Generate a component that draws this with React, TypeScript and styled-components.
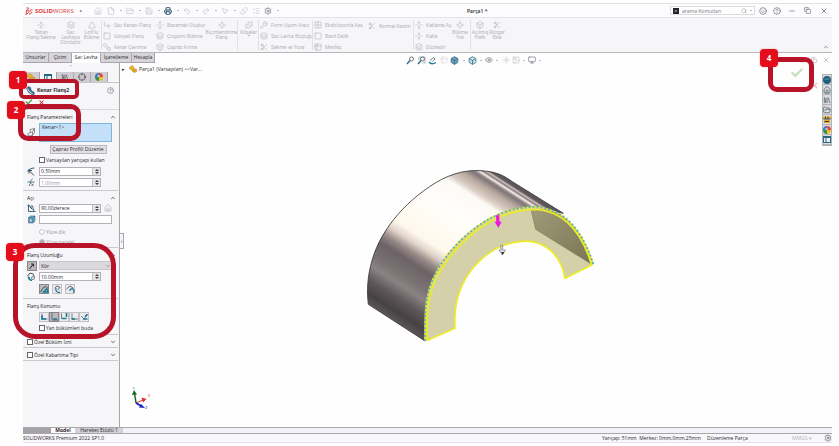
import React from 'react';
import styled, { createGlobalStyle, css } from 'styled-components';
import {
  House, File, FolderOpen, Save, Printer, Undo2, Redo2, MousePointer2, Pill, ListChecks, Settings,
  Search, Smile, CircleHelp, Minus, Copy, X, Check, ChevronUp, ChevronDown, Layers, Box, Puzzle,
  Scissors, FoldVertical, Wrench, Grid2x2, Square, CornerDownRight, Eye, Monitor, Sun, Image as Picture,
  Crosshair, Library, Table2, SquareStack, Component, UnfoldVertical, Triangle,
} from 'lucide-react';

const Global = createGlobalStyle`
  * { box-sizing: border-box; }
  html, body { margin: 0; background: #fefefe; }
  body, button, input, select {
    font-family: "Open Sans", "Noto Sans", sans-serif;
    font-size: 5px;
    line-height: 6px;
    color: #2c2a30;
  }
  button { padding: 0; border: 0; background: none; }
`;

const Page = styled.div`
  position: relative;
  display: flex;
  min-height: 100vh;
  padding: 3px 7px 3px 23px;
`;
const Window = styled.div`
  flex: 1;
  display: flex;
  flex-direction: column;
  min-width: 0;
`;

/* Title bar */
const TitleBar = styled.header`
  display: flex;
  align-items: center;
  height: 15px;
  flex: none;
  border-top: 1px solid #e4e2e6;
  border-bottom: 1px solid #e6e3e7;
  background: #fcfbfd;
`;
const Brand = styled.div`
  display: flex;
  align-items: center;
  gap: 2px;
  width: 68px;
  padding-left: 2px;
  color: #dc3a3c;
  font: 6px/8px "Open Sans", sans-serif;
  white-space: nowrap;
  b { font-weight: 700; }
  small { margin-left: 4px; color: #555; font-size: 4px; }
`;
const Tool = styled.button<{ $w?: number; $color?: string }>`
  display: inline-flex;
  align-items: center;
  justify-content: center;
  flex: none;
  width: ${p => p.$w ?? 12}px;
  height: 10px;
  color: ${p => p.$color ?? '#bfbcc2'};
`;
const Caret = styled.span<{ $w?: number }>`
  width: ${p => p.$w ?? 7}px;
  flex: none;
  display: flex;
  justify-content: center;
  &::after {
    content: "";
    border: 1px solid transparent;
    border-top-color: #77747a;
    border-bottom-width: 0;
  }
`;
const DocTitle = styled.h1`
  flex: 1;
  margin: 0;
  padding-left: 186px;
  font-size: 5px;
  font-weight: 600;
`;
const SearchBox = styled.label`
  display: flex;
  align-items: center;
  width: 85px;
  height: 9px;
  padding-left: 2px;
  border: 1px solid #dddbe0;
  background: #fff;
  color: #99969c;
  input { flex: 1; min-width: 0; border: 0; padding: 0 0 0 3px; outline: 0; background: none; height: 7px; }
  input::placeholder { color: #77747a; }
`;
const SearchMark = styled.span`
  width: 6px;
  height: 6px;
  background: #252329;
  color: #fff;
  font: 700 4px/6px "Open Sans", sans-serif;
  text-align: center;
`;

/* Ribbon */
const Ribbon = styled.div`
  display: flex;
  height: 35px;
  flex: none;
  padding-top: 2px;
  background: #f6f5f8;
  border-bottom: 1px solid #b9b6bb;
  color: #b6b3b9;
  button, span { font-family: Roboto, sans-serif; }
`;
const RibbonRule = styled.i`
  width: 1px;
  margin: 0 1px 2px 0;
  background: #e3e0e5;
`;
const BigButton = styled.button<{ $w: number }>`
  display: flex;
  flex-direction: column;
  align-items: center;
  width: ${p => p.$w}px;
  padding-top: 1px;
  color: inherit;
  flex: none;
  svg { margin-bottom: 1px; flex: none; }
  span { display: flex; white-space: nowrap; line-height: 5px; }
`;
const RibbonColumn = styled.div<{ $w: number }>`
  display: flex;
  flex-direction: column;
  width: ${p => p.$w}px;
  flex: none;
`;
const SmallButton = styled.button`
  display: flex;
  align-items: center;
  gap: 3px;
  height: 11px;
  color: inherit;
  white-space: nowrap;
  svg { flex: none; }
`;
const Collapse = styled.button`
  margin: auto 3px 2px auto;
  display: flex;
  color: #55525a;
`;

/* Command tabs */
const TabRow = styled.div`
  display: flex;
  height: 10px;
  flex: none;
`;
const CommandTab = styled.button<{ $w: number; $active?: boolean }>`
  width: ${p => p.$w}px;
  height: 10px;
  line-height: 9px;
  border-right: 1px solid #a9a6ab;
  border-bottom: 1px solid #a9a6ab;
  background: ${p => (p.$active ? '#fff' : '#d7d5d9')};
  ${p => p.$active && css`border-bottom-color: #fff;`}
`;
const ViewTools = styled.div`
  flex: 1;
  display: flex;
  align-items: center;
  padding: 1px 0 0 250px;
  height: 13px;
`;
const ViewWindow = styled.div`
  display: flex;
  padding-top: 2px;
`;

/* Body */
const Body = styled.div`
  flex: 1;
  display: flex;
  min-height: 0;
`;
const Panel = styled.aside`
  width: 97px;
  flex: none;
  background: #f6f5f8;
  border-right: 1px solid #aaa7ac;
`;
const Grip = styled.div`
  height: 9px;
  text-align: center;
  color: #a8a5aa;
  line-height: 7px;
`;
const PanelTabs = styled.div`
  display: flex;
  height: 11px;
  border-bottom: 1px solid #c9c6cb;
`;
const PanelTab = styled.button<{ $active?: boolean }>`
  width: 17px;
  display: flex;
  align-items: center;
  justify-content: center;
  border-right: 1px solid #a9a6ab;
  background: ${p => (p.$active ? '#f9f8fb' : '#cfcdd1')};
  color: #35323a;
`;
const PanelTitle = styled.div`
  display: flex;
  align-items: center;
  gap: 2px;
  height: 14px;
  padding: 0 5px 0 3px;
  h2 { margin: 0; font-size: 5px; font-weight: 700; flex: 1; }
`;
const Confirm = styled.div`
  display: flex;
  gap: 4px;
  height: 13px;
  padding: 0 0 0 2px;
  border-bottom: 1px solid #dad7dc;
`;
const Section = styled.section<{ $pb?: number }>`
  padding: 1px 2px ${p => p.$pb ?? 3}px 4px;
  border-bottom: 1px solid #cbc8cd;
  margin: 0 1px 0 0;
`;
const SectionHead = styled.h3`
  display: flex;
  align-items: center;
  justify-content: space-between;
  height: 11px;
  margin: 0;
  font-size: 5px;
  font-weight: 400;
  color: #1c1a20;
  label { display: flex; align-items: center; gap: 1px; }
`;
const Row = styled.div<{ $h?: number }>`
  display: grid;
  grid-template-columns: 12px 1fr;
  align-items: center;
  min-height: ${p => p.$h ?? 12}px;
  padding-right: 4px;
`;
const Selection = styled.button`
  height: 19px;
  border: 1px solid #7fb4dd;
  background: #c3e0f8;
  display: flex;
  padding: 0 2px;
`;
const PlainButton = styled.button`
  justify-self: center;
  width: 57px;
  height: 9px;
  margin-left: 5px;
  line-height: 7px;
  border: 1px solid #bbb8bd;
  background: #e3e1e5;
`;
const Field = styled.div`
  display: flex;
  align-items: center;
  gap: 3px;
`;
const Spin = styled.div`
  width: 62px;
  height: 9px;
  display: flex;
  border: 1px solid #b4b1b6;
  background: #fff;
  input { flex: 1; min-width: 0; border: 0; padding: 0 0 0 1px; background: none; outline: 0; height: 7px; }
  input:disabled { color: #99969c; }
`;
const SpinArrows = styled.span`
  width: 8px;
  display: flex;
  flex-direction: column;
  align-items: center;
  justify-content: center;
  gap: 1px;
  background: #e6e4e8;
  border-left: 1px solid #c3c0c5;
  &::before, &::after { content: ""; border: 2px solid transparent; }
  &::before { border-top-width: 0; border-bottom-color: #46434a; }
  &::after { border-bottom-width: 0; border-top-color: #46434a; }
`;
const TextInput = styled.input`
  width: 100%;
  height: 9px;
  border: 1px solid #b4b1b6;
  background: #fff;
  padding: 0 2px;
`;
const Option = styled.label<{ $muted?: boolean }>`
  display: flex;
  align-items: center;
  gap: 1px;
  white-space: nowrap;
  color: ${p => (p.$muted ? '#99969c' : 'inherit')};
`;
const Tick = styled.input<{ $round?: boolean }>`
  appearance: none;
  width: 6px;
  height: 6px;
  margin: 0;
  flex: none;
  border: 1px solid ${p => (p.$round ? '#c9c6cb' : '#68656b')};
  border-radius: ${p => (p.$round ? '50%' : '0')};
  background: #fff;
  &[type="radio"]:checked { background: #aaa7ac; }
`;
const Select = styled.select`
  width: 100%;
  height: 9px;
  appearance: none;
  border: 1px solid #c9c6cb;
  border-radius: 0;
  background: #dbd9dd;
  padding: 0 0 0 1px;
`;
const SelectWrap = styled.div`
  display: grid;
  align-items: center;
  > * { grid-area: 1 / 1; }
  > svg { justify-self: end; margin-right: 1px; pointer-events: none; color: #77747a; }
`;
const Choices = styled.div<{ $gap: number }>`
  display: flex;
  gap: ${p => p.$gap}px;
`;
const Choice = styled.button<{ $on?: boolean }>`
  width: 10px;
  height: 10px;
  display: flex;
  align-items: center;
  justify-content: center;
  border: 1px solid ${p => (p.$on ? '#88858b' : '#c3c0c5')};
  background: ${p => (p.$on ? '#bab8bd' : '#eceaee')};
  svg { flex: none; }
`;

const Viewport = styled.main`
  position: relative;
  flex: 1;
  min-width: 0;
  display: flex;
  align-items: center;
  justify-content: center;
  padding: 22px 0 0 8px;
`;
const Tree = styled.div`
  position: absolute;
  left: 2px;
  top: 1px;
  display: flex;
  align-items: center;
  gap: 2px;
  height: 9px;
  white-space: nowrap;
  span { width: 5px; }
`;
const PanelHandle = styled.button`
  position: absolute;
  left: 0;
  top: 170px;
  width: 4px;
  height: 16px;
  border: 1px solid #aaa7ac;
  border-left: 0;
  background: #f6f5f8;
`;
const Triad = styled.svg`
  position: absolute;
  left: 11px;
  bottom: 16px;
`;
const Corner = styled.div`
  position: absolute;
  right: 13px;
  top: 3px;
  display: flex;
  gap: 6px;
  align-items: flex-start;
  svg:last-child { margin-top: 15px; }
`;
const TaskPane = styled.nav`
  position: absolute;
  right: 0;
  top: 11px;
  width: 10px;
  display: flex;
  flex-direction: column;
  background: #dddbe0;
  border: 1px solid #b4b1b6;
  button { display: flex; height: 10px; align-items: center; justify-content: center; border-bottom: 1px solid #b4b1b6; color: #37525f; }
`;

const BottomTabs = styled.div`
  display: flex;
  height: 7px;
  flex: none;
  background: #f3f1f6;
  border-top: 1px solid #aaa7ac;
  border-bottom: 1px solid #aaa7ac;
`;
const Scroller = styled.span`
  width: 28px;
  background: #a5a2a8;
`;
const BottomTab = styled.button<{ $w: number; $active?: boolean }>`
  width: ${p => p.$w}px;
  line-height: 5px;
  background: ${p => (p.$active ? '#fff' : '#d3d1d5')};
  font-weight: ${p => (p.$active ? 700 : 400)};
`;
const Status = styled.footer`
  display: flex;
  align-items: center;
  height: 9px;
  flex: none;
  background: #f8f7fa;
  border-bottom: 1px solid #e3e0f0;
  white-space: nowrap;
`;
const StatusItem = styled.span<{ $w?: number; $muted?: boolean }>`
  width: ${p => (p.$w ? `${p.$w}px` : 'auto')};
  ${p => !p.$w && 'flex: 1;'}
  color: ${p => (p.$muted ? '#b7b4b9' : 'inherit')};
`;

/* Numbered callouts that float over the window */
const Callout = styled.div<{ $x: number; $y: number; $w: number; $h: number; $r: number; $b: number; $right?: boolean }>`
  position: absolute;
  ${p => (p.$right ? 'right' : 'left')}: ${p => p.$x}px;
  top: ${p => p.$y}px;
  width: ${p => p.$w}px;
  height: ${p => p.$h}px;
  border: ${p => p.$b}px solid #b81429;
  border-radius: ${p => p.$r}px;
  pointer-events: none;
`;
const Badge = styled.span<{ $x: number; $y: number }>`
  position: absolute;
  left: ${p => p.$x}px;
  top: ${p => p.$y}px;
  width: 18px;
  height: 18px;
  border-radius: 4px;
  background: #e30d1b;
  box-shadow: 0 0 2px #e30d1b66;
  color: #fff;
  font: 700 8px/18px "Open Sans", sans-serif;
  text-align: center;
`;

const FlangeIcon = () => (
  <svg width="9" height="9" viewBox="0 0 18 18" fill="none">
    <path d="M1 5l4-4 4 2 2 7 5 2 1 4-4 2-8-5z" fill="#2d6f8d" stroke="#3c4b53" />
    <path d="M3 5l4 7 6 3" stroke="#dde9ef" strokeWidth="2" />
  </svg>
);
const FaceIcon = () => (
  <svg width="9" height="9" viewBox="0 0 18 18" fill="#f3f3f5" stroke="#65666b" strokeWidth="1.4">
    <path d="M6 3l9-2v8l-4 6-9 1v-5l5-2z" /><path d="M7 9l4-1 4-7M11 8v7" fill="none" />
  </svg>
);
const RadiusIcon = () => (
  <svg width="8" height="9" viewBox="0 0 16 18" fill="none">
    <path d="M1 9C4 4 9 2 15 2" stroke="#256f90" strokeWidth="2.2" />
    <path d="M14 17L5 8M4 13V7h6" stroke="#333" strokeWidth="1.8" />
  </svg>
);
const GapIcon = () => (
  <svg width="8" height="9" viewBox="0 0 16 18" fill="none">
    <path d="M1 8h14M8 8L4 16" stroke="#4d7c8b" strokeWidth="2" />
    <path d="M11 1L6 8M9 11l4 5M13 11l-4 5" stroke="#666" strokeWidth="1.6" />
  </svg>
);
const AngleIcon = () => (
  <svg width="9" height="9" viewBox="0 0 18 18" fill="none" stroke="#2a5e79" strokeWidth="1.8">
    <path d="M3 1v14h14M1 3h4M3 4c6 0 10 4 11 10" /><path d="M6 6l5 5M9 3l4 3" stroke="#353239" />
  </svg>
);
const CubeIcon = () => (
  <svg width="9" height="9" viewBox="0 0 18 18" stroke="#23566f">
    <path d="M3 5l4-3h9v10l-4 4H3z" fill="#73b4d0" /><path d="M3 5h9v11M12 5l4-3" fill="none" /><path d="M5 8h5v6H5z" fill="#d9edf6" />
  </svg>
);
const EdgeIcon = ({ v }: { v: number }) => (
  <svg width="9" height="9" viewBox="0 0 18 18" fill="none">
    <path d={['M1 14l6-9 5-2 3 3', 'M3 6l5-4 6 3-5 5', 'M1 8l7-6 6 4'][v]} stroke="#3a3f46" strokeWidth="1.6" />
    <path d={['M7 14l7-7 2 7z', 'M6 6c-2 6 2 9 8 9', 'M8 12a4 4 0 1 1 6 3'][v]} stroke="#1d7896" strokeWidth="2.6" />
  </svg>
);
const LengthIcon = () => (
  <svg width="9" height="9" viewBox="0 0 18 18" fill="none">
    <path d="M1 8l5-6 6 2 3 5" stroke="#3a3f46" strokeWidth="1.8" />
    <path d="M3 9c0 4 3 7 7 8" stroke="#1d7896" strokeWidth="3.4" />
    <circle cx="12" cy="12" r="3" stroke="#55666e" strokeWidth="1.6" />
  </svg>
);
const BendIcon = ({ v }: { v: number }) => (
  <svg width="9" height="9" viewBox="0 0 18 18" fill="none">
    <path d={['M4 3v11h11', 'M4 1v15h12', 'M3 3v10h9', 'M4 3v11h12', 'M2 8l6 6 8-10'][v]} stroke="#4a5960" strokeWidth="1.5" />
    <path d={['M4 7v7h8', 'M7 14h7', 'M4 13h9M13 2v8', 'M3 14h7', 'M6 14h9M10 9l4-4'][v]} stroke="#1b7896" strokeWidth="3.2" />
  </svg>
);
const ZoomFit = ({ area = false }: { area?: boolean }) => (
  <svg width="9" height="9" viewBox="0 0 18 18" fill="none">
    {area && <path d="M4 9V2h12v12h-4" stroke="#8b999f" strokeWidth="1.3" />}
    <circle cx="11" cy="6" r="4" stroke="#5c6970" strokeWidth="1.8" />
    <path d="M8 9l-6 7" stroke="#2f6f8a" strokeWidth="2.8" />
  </svg>
);
const PreviousView = () => (
  <svg width="9" height="9" viewBox="0 0 18 18" fill="none">
    <path d="M4 9l7-6 3 3-5 5" stroke="#5c6970" strokeWidth="1.8" /><path d="M2 12c3 4 9 4 14 1" stroke="#2f7f9c" strokeWidth="2.8" />
  </svg>
);
const PartIcon = () => (
  <svg width="8" height="8" viewBox="0 0 16 16" stroke="#a87916">
    <path d="M1 5l5-4 4 3v3l5 2v4l-4 2-5-3V9L1 8z" fill="#efb72e" /><path d="M6 9l5 2 4-2M11 11v4" fill="none" />
  </svg>
);
const ColorBall = () => (
  <svg width="8" height="8" viewBox="0 0 16 16">
    <path d="M8 8V0a8 8 0 0 1 8 8z" fill="#e54538" /><path d="M8 8h8a8 8 0 0 1-8 8z" fill="#f0bf28" />
    <path d="M8 8v8a8 8 0 0 1-8-8z" fill="#2d9550" /><path d="M8 8H0a8 8 0 0 1 8-8z" fill="#3178c9" />
    <circle cx="7" cy="6" r="2.5" fill="#fff" opacity=".6" />
  </svg>
);
const PropertyIcon = () => (
  <svg width="8" height="7" viewBox="0 0 16 14"><path d="M0 0h16v14H0z" fill="#286682" /><path d="M2 4h3v8H2zM7 4h7v8H7z" fill="#e9f3f8" /></svg>
);
const BrandMark = () => (
  <svg width="8" height="8" viewBox="0 0 16 16" fill="none" stroke="#dc2f32" strokeWidth="1.8">
    <path d="M3 2c5-1 6 1 3 3L2 7M3 8c5-2 7 0 3 4l-4 3zM15 6c-5-1-6 1-3 3s1 5-4 5" />
  </svg>
);

const OUTER = 'M225 555C225 500 224 460 232 425C245 350 300 270 385 209C440 170 500 152 560 153C650 160 700 230 730 325';
const Model = () => (
  <svg width="260" height="200" viewBox="0 0 780 600" role="img" aria-label="Parça1">
    <defs>
      <linearGradient id="metal" gradientUnits="userSpaceOnUse" x1="55" y1="445" x2="343" y2="-4">
        <stop offset="0" stopColor="#5b5557" /><stop offset=".05" stopColor="#464144" />
        <stop offset=".12" stopColor="#5f585a" /><stop offset=".19" stopColor="#8b8283" />
        <stop offset=".24" stopColor="#7b7274" /><stop offset=".33" stopColor="#6c6366" />
        <stop offset=".38" stopColor="#978a88" /><stop offset=".43" stopColor="#e0d4ca" />
        <stop offset=".48" stopColor="#fff9ec" /><stop offset=".7" stopColor="#fffefb" />
        <stop offset=".83" stopColor="#fdfaf6" /><stop offset=".86" stopColor="#dccfc6" />
        <stop offset=".91" stopColor="#baa99f" /><stop offset=".945" stopColor="#81777a" />
        <stop offset=".955" stopColor="#938988" /><stop offset=".968" stopColor="#f6efeb" />
        <stop offset=".98" stopColor="#85797a" /><stop offset=".988" stopColor="#cfc3bf" /><stop offset="1" stopColor="#5e565a" />
      </linearGradient>
      <linearGradient id="inside" x1="0" y1="0" x2="1" y2="1">
        <stop offset="0" stopColor="#a09b78" /><stop offset="1" stopColor="#797453" />
      </linearGradient>
    </defs>
    <path d="M55 445C50 405 52 360 67 310C95 215 175 125 275 70C330 43 375 38 430 49C455 55 470 65 490 79L640 172L560 153C500 152 440 170 385 209C300 270 245 350 232 425C224 460 225 500 225 555Z" fill="url(#metal)" stroke="#39353a" strokeWidth="2.5" />
    <path d={`${OUTER}L645 367C635 300 585 250 515 256C405 265 305 370 315 517L232 555Z`} fill="#d3d0aa" />
    <path d="M543 160L557 220L725 325C700 235 650 175 600 160Z" fill="url(#inside)" />
    <path d="M543 160L557 220L725 325" fill="none" stroke="#716d50" strokeWidth="1.5" />
    <path d="M232 553C230 500 231 460 239 427C252 355 307 277 390 216C443 178 500 160 560 160C645 166 697 236 725 327L645 367C635 300 585 250 515 256C405 265 305 370 315 517Z" fill="none" stroke="#eeec25" strokeWidth="5" />
    <path d={OUTER} fill="none" stroke="#e5e83c" strokeWidth="5" />
    <path d={OUTER} fill="none" stroke="#45a7d2" strokeWidth="5" strokeDasharray="5 7" />
    <path d="M438 178h10v19h7l-10 18-11-18h5z" fill="#f014dc" />
    <path d="M452 268h6v14h8l-9 15-10-15h6z" fill="#e4e1e5" stroke="#77737b" strokeWidth="2" />
    <path d="M453 288h10l-5 9z" fill="#39353a" />
  </svg>
);

const s = { size: 8, strokeWidth: 1.8 };
const FILE_TOOLS = [File, FolderOpen, Save, Printer, Undo2, Redo2, MousePointer2];

const Column = ({ w, items }: { w: number; items: [React.ElementType, string][] }) => (
  <RibbonColumn $w={w}>
    {items.map(([Icon, label]) => <SmallButton key={label}><Icon {...s} />{label}</SmallButton>)}
  </RibbonColumn>
);
const Big = ({ w, icon: Icon, lines }: { w: number; icon: React.ElementType; lines: string[] }) => (
  <BigButton $w={w}><Icon {...s} />{lines.map(l => <span key={l}>{l}</span>)}</BigButton>
);
const SpinField = ({ label, value, disabled }: { label: string; value: string; disabled?: boolean }) => (
  <Spin><input aria-label={label} defaultValue={value} disabled={disabled} /><SpinArrows /></Spin>
);
const Up = () => <ChevronUp size={6} strokeWidth={2.5} />;
const Down = () => <ChevronDown size={6} strokeWidth={2.5} />;

export default function App() {
  return (
    <Page>
      <Global />
      <Window>
        <TitleBar>
          <Brand><BrandMark /><span><b>SOLID</b>WORKS</span><small>▸</small></Brand>
          <Tool $w={14} aria-label="Giriş"><House {...s} /></Tool>
          {FILE_TOOLS.map((Icon, i) => (
            <React.Fragment key={i}>
              <Tool aria-label={`Araç ${i + 1}`} $color={i === 3 ? '#31586e' : undefined}><Icon {...s} strokeWidth={i === 3 ? 3 : 1.8} /></Tool>
              <Caret />
            </React.Fragment>
          ))}
          <Tool aria-label="Yeniden oluştur"><Pill {...s} /></Tool>
          <Tool aria-label="Dosya özellikleri"><ListChecks {...s} /></Tool>
          <Tool aria-label="Seçenekler" $color="#69666c"><Settings {...s} /></Tool>
          <Caret />
          <DocTitle>Parça1 *</DocTitle>
          <SearchBox>
            <SearchMark>&gt;</SearchMark>
            <input aria-label="Arama Komutları" placeholder="arama Komutları" />
            <Search size={6} /><Caret />
          </SearchBox>
          <Tool $w={15} $color="#5f5c62" aria-label="Oturum"><Smile {...s} /></Tool>
          <Tool $w={14} $color="#5f5c62" aria-label="Yardım"><CircleHelp {...s} /></Tool>
          <Tool $w={16} $color="#5f5c62" aria-label="Küçült"><Minus {...s} /></Tool>
          <Tool $w={15} $color="#5f5c62" aria-label="Geri yükle"><Copy size={7} /></Tool>
          <Tool $w={17} $color="#3f3c42" aria-label="Kapat"><X {...s} /></Tool>
        </TitleBar>

        <Ribbon>
          <Big w={36} icon={FoldVertical} lines={['Taban', 'Flanş/Sekme']} />
          <Big w={23} icon={Layers} lines={['Sac', 'Levhaya', 'Dönüştür']} />
          <Big w={19} icon={Triangle} lines={["Loft'lu", 'Bükme']} />
          <RibbonRule />
          <Column w={53} items={[[CornerDownRight, 'Sac Kenarı Flanş'], [Square, 'Gönyeli Flanş'], [SquareStack, 'Kenar Çevirme']]} />
          <Column w={50} items={[[UnfoldVertical, 'Basamak Oluştur'], [Layers, 'Çizgisini Bükme'], [Box, 'Çapraz Kırma']]} />
          <Big w={31} icon={Component} lines={['Biçimlendirme', 'Flanş']} />
          <RibbonRule />
          <BigButton $w={19}><Puzzle {...s} /><span>Köşeler</span><Caret /></BigButton>
          <RibbonRule />
          <Column w={52} items={[[Wrench, 'Form Uyum Aracı'], [Layers, 'Sac Levha Boşluğu'], [Scissors, 'Sekme ve Yuva']]} />
          <RibbonRule />
          <Column w={54} items={[[Grid2x2, 'Ekstrüzyonla Kes'], [Square, 'Basit Delik'], [Table2, 'Menfez']]} />
          <Column w={45} items={[[Scissors, 'Normal Kesim']]} />
          <RibbonRule />
          <Column w={35} items={[[UnfoldVertical, 'Katlama Aç'], [FoldVertical, 'Katla'], [Layers, 'Düzleştir']]} />
          <Big w={20} icon={Component} lines={['Bükme', 'Yok']} />
          <RibbonRule />
          <Big w={16} icon={Box} lines={['Açılmış', 'Hattı']} />
          <Big w={18} icon={Scissors} lines={['Rüzgar', 'Ekle']} />
          <Collapse aria-label="Şeridi daralt"><Up /></Collapse>
        </Ribbon>

        <TabRow>
          <CommandTab $w={26}>Unsurlar</CommandTab>
          <CommandTab $w={23}>Çizim</CommandTab>
          <CommandTab $w={29} $active>Sac Levha</CommandTab>
          <CommandTab $w={31}>İşaretleme</CommandTab>
          <CommandTab $w={23}>Hesapla</CommandTab>
          <ViewTools>
            <Tool aria-label="Sığdır" $w={11}><ZoomFit /></Tool>
            <Tool aria-label="Alana yakınlaştır" $w={11}><ZoomFit area /></Tool>
            <Tool aria-label="Önceki görünüm" $w={11}><PreviousView /></Tool>
            <Tool aria-label="Kesit görünümü" $w={11} $color="#dcd9de"><Table2 {...s} /></Tool>
            <Tool aria-label="Görünüm yönü" $w={11} $color="#33677f"><Box size={9} fill="#6aa2b9" /></Tool><Caret />
            <Tool aria-label="Görüntü stili" $w={11} $color="#33677f"><Box size={9} fill="#c4e2ec" /></Tool><Caret $w={5} />
            <Tool aria-label="Gizle" $w={11} $color="#66636a"><Eye {...s} /></Tool><Caret $w={6} />
            <Tool aria-label="Görünüm" $w={11}><Sun {...s} /></Tool>
            <Tool aria-label="Sahne" $w={10}><Picture {...s} /></Tool><Caret $w={5} />
            <Tool aria-label="Görünüm ayarları" $w={11} $color="#5b6670"><Monitor {...s} /></Tool><Caret $w={5} />
          </ViewTools>
          <ViewWindow>
            <Tool aria-label="Alt pencereyi küçült"><Minus {...s} /></Tool>
            <Tool aria-label="Alt pencere"><Square size={6} /></Tool>
            <Tool aria-label="Alt pencereyi geri yükle" $color="#a5a2a8"><Copy size={6} /></Tool>
            <Tool aria-label="Alt pencereyi kapat" $color="#a5a2a8"><X {...s} /></Tool>
          </ViewWindow>
        </TabRow>

        <Body>
          <Panel>
            <Grip>•</Grip>
            <PanelTabs>
              <PanelTab aria-label="Unsur ağacı"><PartIcon /></PanelTab>
              <PanelTab aria-label="Özellikler" $active><PropertyIcon /></PanelTab>
              <PanelTab aria-label="Konfigürasyon"><Library {...s} /></PanelTab>
              <PanelTab aria-label="Ölçümlendirme"><Crosshair {...s} /></PanelTab>
              <PanelTab aria-label="Görünümler"><ColorBall /></PanelTab>
            </PanelTabs>
            <PanelTitle><FlangeIcon /><h2>Kenar Flanş2</h2><CircleHelp size={7} color="#61727c" /></PanelTitle>
            <Confirm>
              <Tool $w={8} $color="#4b9b3b" aria-label="Tamam"><Check size={8} strokeWidth={3.5} /></Tool>
              <Tool $w={8} $color="#d4262c" aria-label="İptal"><X size={7} strokeWidth={3.5} /></Tool>
            </Confirm>
            <Section>
              <SectionHead>Flanş Parametreleri<Up /></SectionHead>
              <Row $h={20}><FaceIcon /><Selection>Kenar&lt;1&gt;</Selection></Row>
              <Row $h={14}><span /><PlainButton>Çapraz Profili Düzenle</PlainButton></Row>
              <Row $h={8}><span /><Option><Tick type="checkbox" />Varsayılan yarıçapı kullan</Option></Row>
              <Row $h={14}><RadiusIcon /><SpinField label="Büküm yarıçapı" value="0.50mm" /></Row>
              <Row $h={9}><GapIcon /><SpinField label="Boşluk mesafesi" value="1.00mm" disabled /></Row>
            </Section>
            <Section $pb={1}>
              <SectionHead>Açı<Up /></SectionHead>
              <Row $h={10}><AngleIcon /><Field><SpinField label="Flanş açısı" value="90.00derece" /><House size={8} color="#b2afb5" /></Field></Row>
              <Row $h={13}><CubeIcon /><TextInput aria-label="Yüz seçimi" /></Row>
              <Row $h={11}><span /><Option $muted><Tick type="radio" name="face" $round />Yüze dik</Option></Row>
              <Row $h={9}><span /><Option $muted><Tick type="radio" name="face" $round defaultChecked />Yüze paralel</Option></Row>
            </Section>
            <Section $pb={2}>
              <SectionHead>Flanş Uzunluğu<Up /></SectionHead>
              <Row $h={11}>
                <Choice $on aria-label="Yönü ters çevir"><svg width="8" height="8" viewBox="0 0 16 16" fill="none" stroke="#29262d" strokeWidth="2"><path d="M3 14l8-10M6 4h5v5" /></svg></Choice>
                <SelectWrap><Select aria-label="Uzunluk bitiş koşulu"><option>Kör</option></Select><Down /></SelectWrap>
              </Row>
              <Row $h={11}><LengthIcon /><SpinField label="Uzunluk" value="10.00mm" /></Row>
              <Row $h={14}><span /><Choices $gap={3}>
                {[0, 1, 2].map(v => <Choice key={v} $on={v === 0} aria-label={`Uzunluk ölçümü ${v + 1}`}><EdgeIcon v={v} /></Choice>)}
              </Choices></Row>
            </Section>
            <Section $pb={0}>
              <SectionHead>Flanş Konumu<Up /></SectionHead>
              <Row $h={11}><span /><Choices $gap={0}>
                {[0, 1, 2, 3, 4].map(v => <Choice key={v} $on={v === 1} aria-label={`Flanş konumu ${v + 1}`}><BendIcon v={v} /></Choice>)}
              </Choices></Row>
              <Row $h={12}><span /><Option><Tick type="checkbox" />Yan bükümleri buda</Option></Row>
            </Section>
            <Section $pb={0}>
              <SectionHead><label><Tick type="checkbox" />Özel Büküm İzni</label><Down /></SectionHead>
            </Section>
            <Section $pb={0}>
              <SectionHead><label><Tick type="checkbox" />Özel Kabartma Tipi</label><Down /></SectionHead>
            </Section>
          </Panel>

          <Viewport>
            <Tree><span>▸</span><PartIcon />Parça1 (Varsayılan) &lt;&lt;Var...</Tree>
            <PanelHandle aria-label="Paneli gizle">‹</PanelHandle>
            <Model />
            <Corner>
              <Check size={14} strokeWidth={4} color="#c6e2bd" />
              <X size={9} strokeWidth={4} color="#efc4c6" />
            </Corner>
            <TaskPane>
              <button aria-label="3DEXPERIENCE"><svg width="8" height="8" viewBox="0 0 16 16"><circle cx="8" cy="8" r="8" fill="#205f7a" /><path d="M3 6h10" stroke="#5d9cb5" strokeWidth="2" /></svg></button>
              <button aria-label="Kaynaklar"><House size={8} /></button>
              <button aria-label="Tasarım kitaplığı"><Library size={8} /></button>
              <button aria-label="Dosya gezgini"><FolderOpen size={8} /></button>
              <button aria-label="Görünüm paleti"><svg width="8" height="8" viewBox="0 0 16 16"><path d="M0 1h16v5H0zM2 8h12v6H2z" fill="#e0ad30" /><path d="M1 6h14M3 11h9M5 1v4M10 1v4" stroke="#423b33" strokeWidth="2" /></svg></button>
              <button aria-label="Görünümler"><ColorBall /></button>
              <button aria-label="Özel özellikler"><PropertyIcon /></button>
            </TaskPane>
            <Triad width="20" height="24" viewBox="0 0 40 48">
              <path d="M10 32L7 12" stroke="#176c24" strokeWidth="3" /><path d="M2 16l4-10 6 9z" fill="#176c24" />
              <path d="M10 32l14-6" stroke="#dd2a2c" strokeWidth="2" /><path d="M21 21l10 3-7 7z" fill="#dd2a2c" />
              <path d="M10 32l12 7" stroke="#1c23c2" strokeWidth="4" /><path d="M20 34l8 8-12-1z" fill="#1c23c2" />
              <text x="4" y="5" fontSize="6" fill="#176c24">Y</text><text x="34" y="20" fontSize="7" fill="#dd2a2c">X</text><text x="28" y="43" fontSize="8" fill="#1c23c2">Z</text>
            </Triad>
          </Viewport>
        </Body>

        <BottomTabs>
          <Scroller />
          <BottomTab $w={24} $active>Model</BottomTab>
          <BottomTab $w={48}>Hareket Etüdü 1</BottomTab>
        </BottomTabs>
        <Status>
          <StatusItem>SOLIDWORKS Premium 2022 SP1.0</StatusItem>
          <StatusItem $w={105}>Yarıçap: 51mm&nbsp; Merkez: 0mm,0mm,25mm</StatusItem>
          <StatusItem $w={85}>Düzenleme Parça</StatusItem>
          <StatusItem $w={32} $muted>MMGS ▾</StatusItem>
          <Settings size={8} color="#68656b" />
        </Status>
      </Window>

      <Callout $x={19} $y={79} $w={60} $h={20} $r={5} $b={4}><Badge $x={-14} $y={-12}>1</Badge></Callout>
      <Callout $x={18} $y={104} $w={63} $h={37} $r={10} $b={5}><Badge $x={-16} $y={-8}>2</Badge></Callout>
      <Callout $x={13} $y={243} $w={103} $h={96} $r={22} $b={5}><Badge $x={-12} $y={-5}>3</Badge></Callout>
      <Callout $right $x={25} $y={57} $w={46} $h={35} $r={9} $b={5}><Badge $x={-13} $y={-13}>4</Badge></Callout>
    </Page>
  );
}
